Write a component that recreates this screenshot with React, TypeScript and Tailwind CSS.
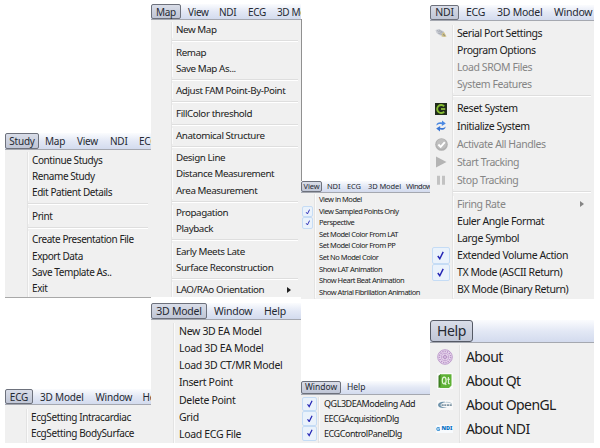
import React from "react";

type Entry = {
  label?: string;
  sep?: boolean;
  off?: boolean;
  checked?: boolean;
  sub?: boolean;
  tall?: boolean;
  icon?: React.ReactNode;
};

type Tab = { label: string; cls: string };

type MenuProps = {
  cls: string;
  bar: string;
  button: string;
  tabs: Tab[];
  gutter: string;
  row: string;
  sepRow?: string;
  text: string;
  pad: string;
  entries: Entry[];
};

const sep: Entry = { sep: true };

function Check() {
  return (
    <span className="flex h-full w-[84%] items-center justify-center rounded-[2px] border border-[#c5dcf5] bg-[#eaf2fb]">
      <svg viewBox="0 0 10 10" className="h-[60%]">
        <path d="M2 5.6 L4.2 8.6 L8 1" fill="none" stroke="#2424b4" strokeWidth="1.6" />
      </svg>
    </span>
  );
}

function Menu({ cls, bar, button, tabs, gutter, row, sepRow = "h-[7px]", text, pad, entries }: MenuProps) {
  return (
    <section className={`flex flex-col overflow-hidden ${cls}`}>
      <nav
        className={`flex shrink-0 items-stretch overflow-hidden border-b border-[#a5a8b0] bg-linear-to-b from-[#fbfcfe] via-[#e3e8f5] to-[#d3dbee] whitespace-nowrap text-[#252932] ${bar}`}
      >
        {tabs.map((t, i) => (
          <span
            key={t.label}
            className={`flex shrink-0 items-center ${t.cls} ${
              i === 0
                ? `justify-center rounded-[2px] border border-[#6d717c] bg-linear-to-b from-[#d9dde8] to-[#c0c6d6] ${button}`
                : ""
            }`}
          >
            {t.label}
          </span>
        ))}
      </nav>
      <ul className={`flex flex-1 flex-col bg-[#f0f0f0] whitespace-nowrap text-[#202020] ${text}`}>
        {entries.map((e, i) => (
          <li key={i} className={`flex shrink-0 items-stretch ${e.sep ? sepRow : e.tall ? "h-[17.9px]" : row}`}>
            <span className={`flex shrink-0 items-center justify-center border-r border-[#e3e3e3] ${gutter}`}>
              {e.checked ? <Check /> : e.icon}
            </span>
            {e.sep ? (
              <span className="mr-[3px] flex flex-1 items-center">
                <span className="h-[2px] w-full border-t border-b border-t-[#dedede] border-b-white" />
              </span>
            ) : (
              <span
                className={`flex flex-1 items-center border-l border-[#fbfbfb] ${pad} ${e.off ? "text-[#858585]" : ""}`}
              >
                {e.label}
                {e.sub && (
                  <svg viewBox="0 0 4 6" className="mr-[10px] ml-auto h-[6px] w-[4px]">
                    <path d="M0 0 L4 3 L0 6Z" fill="currentColor" />
                  </svg>
                )}
              </span>
            )}
          </li>
        ))}
        <li className="flex flex-1 items-stretch">
          <span className={`shrink-0 border-r border-[#e3e3e3] ${gutter}`} />
        </li>
      </ul>
    </section>
  );
}

const SerialIcon = () => (
  <svg viewBox="0 0 12 12" className="h-[12px] w-[12px]">
    <path d="M.5 3 L4 2 L9 4.500 L9 8.500 L5 8.500 L1.500 6Z" fill="#c9ccd3" />
    <path d="M2 3.500 L7 6 M4 3 L8 5.500 M3 6 L7 7.500" stroke="#9a9fa9" strokeWidth=".7" />
    <path d="M7 6.500 L9 5 L11.500 9.500 L9.500 10 L6.500 9.500Z" fill="#cdbf86" />
    <path d="M8 7.500 L10 8.500" stroke="#777" strokeWidth=".8" />
  </svg>
);

const ResetIcon = () => (
  <svg viewBox="0 0 12 12" className="h-[12px] w-[12px]">
    <rect width="12" height="12" fill="#202a1b" />
    <path d="M9.2 3.4 A4 4 0 1 0 9.2 8.6" fill="none" stroke="#86bd32" strokeWidth="1.9" />
    <path d="M10.2 6 H6" fill="none" stroke="#a5d94a" strokeWidth="1.500" />
  </svg>
);

const RefreshIcon = () => (
  <svg viewBox="0 0 12 12" className="h-[12px] w-[12px]">
    <path d="M1.400 5.600 C1.400 2.800 4 1.900 7 2.400 L7 .5 L10.800 3.500 L6.800 5.900 L6.900 4.200 C4.500 3.700 2.800 4 1.400 5.600Z" fill="#4a88e2" />
    <path d="M10.600 6.400 C10.600 9.200 8 10.100 5 9.600 L5 11.500 L1.200 8.500 L5.200 6.100 L5.100 7.800 C7.500 8.300 9.200 8 10.600 6.400Z" fill="#3a76d4" />
  </svg>
);

const ActivateIcon = () => (
  <svg viewBox="0 0 13 13" className="h-[13px] w-[13px]">
    <circle cx="6.500" cy="6.500" r="6.300" fill="#b0b0b0" />
    <circle cx="6.500" cy="6" r="5" fill="#bfbfbf" />
    <path d="M3.400 6.500 L5.700 8.900 L9.800 4.200" fill="none" stroke="#fff" strokeWidth="1.900" />
  </svg>
);

const PlayIcon = () => (
  <svg viewBox="0 0 12 12" className="h-[12px] w-[12px]">
    <path d="M1 .6 L11.500 6 L1 11.400Z" fill="#b4b4b4" />
  </svg>
);

const PauseIcon = () => (
  <svg viewBox="0 0 12 12" className="h-[12px] w-[12px]">
    <path d="M2 1.800h3v9h-3z M7 1.800h3v9h-3z" fill="#c2c2c2" />
  </svg>
);

const SealIcon = () => (
  <svg viewBox="0 0 16 16" className="h-[16px] w-[16px]" fill="none" stroke="#b995c8">
    <circle cx="8" cy="8" r="7.300" fill="#ead9ef" strokeWidth=".9" />
    <circle cx="8" cy="8" r="5.600" strokeWidth="1.500" strokeDasharray="1.3 1" />
    <circle cx="8" cy="8" r="3.800" strokeWidth=".7" />
    <circle cx="8" cy="8" r="1.700" strokeWidth="1" />
    <path d="M8 4.500v7 M4.500 8h7" strokeWidth=".6" />
  </svg>
);

const QtIcon = () => (
  <svg viewBox="0 0 16 16" className="h-[16px] w-[16px]">
    <rect width="16" height="16" fill="#fafafa" />
    <path d="M3 1.200 H14.500 V12.500 L12 15 H2 L3 13.500Z" fill="#5eb135" />
    <path d="M1.500 2.800 L3.500 1.200 V13.500 L1.500 15Z" fill="#3f7f22" />
    <ellipse cx="7.200" cy="7.500" rx="1.900" ry="3.400" fill="none" stroke="#e4f5da" strokeWidth="1.200" />
    <path
      d="M7.500 9.500 L9.200 12 M11.400 4 V10 Q11.400 11 12.800 10.600 M10.200 6.300 H13"
      fill="none"
      stroke="#e4f5da"
      strokeWidth="1.100"
    />
  </svg>
);

const OpenGLIcon = () => (
  <svg viewBox="0 0 16 10" className="h-[10px] w-[16px]">
    <rect width="16" height="10" fill="#f8f8f8" />
    <path
      d="M9 2.200 C5 .8 1 2.500 1 5 C1 7.800 6 8.800 10 7.300 C6 7.600 3.500 6.500 3.500 5 C3.500 3.500 6 2.400 9 2.200Z"
      fill="#6f93ab"
    />
    <path d="M4.500 5.200h2.200 M7.300 5.200h2 M10 5.200h2 M12.600 5.200h2.200" stroke="#8298a7" strokeWidth="1.800" />
    <path d="M9 2.200 Q14 2 15 4.200" fill="none" stroke="#a9bfcc" strokeWidth=".8" />
  </svg>
);

const NdiIcon = () => (
  <span className="flex h-[8px] w-[17px] items-center justify-center gap-[1px] bg-[#f7fafd] text-[5.500px] leading-none font-black tracking-normal text-[#0873c4]">
    <svg viewBox="0 0 4 4" className="h-[4px] w-[4px]" fill="none" stroke="#4c9bd6" strokeWidth="1.100">
      <path d="M3.500 .8 A1.600 1.600 0 1 0 3.500 3.200 V2 H2" />
    </svg>
    NDI
  </span>
);

const L = (label: string): Entry => ({ label });

export default function App() {
  return (
    <main className="flex h-[448px] w-[600px] overflow-hidden bg-white pl-[5px] font-['Noto_Sans','Open_Sans',sans-serif] leading-none">
      <div className="flex w-[146px] flex-col pt-[133px]">
        <Menu
          cls="h-[165px] border-b border-[#a8a8a8]"
          bar="h-[17px] text-[10px] tracking-[-0.25px]"
          button="h-[16px]"
          tabs={[
            { label: "Study", cls: "w-[34px]" },
            { label: "Map", cls: "ml-[6px] w-[32px]" },
            { label: "View", cls: "w-[33px]" },
            { label: "NDI", cls: "w-[29px]" },
            { label: "ECG", cls: "w-[30px]" },
          ]}
          gutter="w-[23px]"
          row="h-[16.400px]"
          text="pt-[1.500px] text-[10px] tracking-[-0.42px]"
          pad="pl-[3px]"
          entries={[
            L("Continue Studys"),
            L("Rename Study"),
            L("Edit Patient Details"),
            sep,
            L("Print"),
            sep,
            L("Create Presentation File"),
            L("Export Data"),
            L("Save Template As.."),
            L("Exit"),
          ]}
        />
        <Menu
          cls="mt-[91px] h-[54px]"
          bar="h-[16px] text-[10px] tracking-[-0.2px]"
          button="h-[15px]"
          tabs={[
            { label: "ECG", cls: "w-[28px]" },
            { label: "3D Model", cls: "ml-[7px] w-[55.500px]" },
            { label: "Window", cls: "w-[47px]" },
            { label: "Help", cls: "w-[30px]" },
          ]}
          gutter="w-[22px]"
          row="h-[16.600px]"
          text="pt-[3.500px] text-[10px] tracking-[-0.38px]"
          pad="pl-[3px]"
          entries={[L("EcgSetting Intracardiac"), L("EcgSetting BodySurface")]}
        />
      </div>

      <div className="flex w-[150px] flex-col pt-[4px]">
        <Menu
          cls="h-[293px]"
          bar="h-[16px] text-[10px] tracking-[-0.35px]"
          button="h-[15px]"
          tabs={[
            { label: "Map", cls: "w-[30px]" },
            { label: "View", cls: "ml-[7px] w-[31px]" },
            { label: "NDI", cls: "w-[29px]" },
            { label: "ECG", cls: "w-[29px]" },
            { label: "3D Model", cls: "w-[50px]" },
          ]}
          gutter="w-[21px]"
          row="h-[16.200px]"
          sepRow="h-[6.200px]"
          text="pt-[2px] text-[9.800px] tracking-[-0.42px]"
          pad="pl-[3px]"
          entries={[
            L("New Map"),
            sep,
            L("Remap"),
            L("Save Map As..."),
            sep,
            L("Adjust FAM Point-By-Point"),
            sep,
            L("FillColor threshold"),
            sep,
            L("Anatomical Structure"),
            sep,
            L("Design Line"),
            L("Distance Measurement"),
            L("Area Measurement"),
            sep,
            L("Propagation"),
            L("Playback"),
            sep,
            L("Early Meets Late"),
            L("Surface Reconstruction"),
            sep,
            { label: "LAO/RAo Orientation", sub: true },
          ]}
        />
        <Menu
          cls="mt-[6px] h-[140px]"
          bar="h-[17px] text-[10.500px] tracking-[-0.25px]"
          button="h-[16px]"
          tabs={[
            { label: "3D Model", cls: "w-[56px]" },
            { label: "Window", cls: "ml-[7px] w-[50px]" },
            { label: "Help", cls: "w-[30px]" },
          ]}
          gutter="w-[23px]"
          row="h-[17.200px]"
          text="pt-[2.500px] text-[10.500px] tracking-[-0.32px]"
          pad="pl-[4px]"
          entries={[
            L("New 3D EA Model"),
            L("Load 3D EA Model"),
            L("Load 3D CT/MR Model"),
            L("Insert Point"),
            L("Delete Point"),
            L("Grid"),
            L("Load ECG File"),
          ]}
        />
      </div>

      <div className="flex w-[129px] flex-col">
        <div className="mt-[19px] h-[162px] w-full shrink-0 border-l border-[#909090]" />
        <Menu
          cls="h-[118px] shrink-0"
          bar="h-[12px] text-[7.500px] tracking-[-0.1px]"
          button="h-[11px]"
          tabs={[
            { label: "View", cls: "w-[21px]" },
            { label: "NDI", cls: "ml-[5px] w-[20px]" },
            { label: "ECG", cls: "w-[21px]" },
            { label: "3D Model", cls: "w-[38px]" },
            { label: "Window", cls: "w-[30px] tracking-[-0.5px]" },
          ]}
          gutter="w-[14px]"
          row="h-[11.600px]"
          text="pt-[1px] text-[7.500px] tracking-[-0.48px]"
          pad="pl-[3px]"
          entries={[
            L("View in Model"),
            { label: "View Sampled Points Only", checked: true },
            { label: "Perspective", checked: true },
            L("Set Model Color From LAT"),
            L("Set Model Color From PP"),
            L("Set No Model Color"),
            L("Show LAT Animation"),
            L("Show Heart Beat Animation"),
            L("Show Atrial Fibrillation Animation"),
          ]}
        />
        <Menu
          cls="mt-[82px] h-[62px] shrink-0"
          bar="h-[14px] text-[8.500px] tracking-[0px]"
          button="h-[13px]"
          tabs={[
            { label: "Window", cls: "w-[40px]" },
            { label: "Help", cls: "ml-[6px] w-[30px]" },
          ]}
          gutter="w-[18px]"
          row="h-[14.700px]"
          text="pt-[1.500px] text-[9px] tracking-[-0.46px]"
          pad="pl-[4px]"
          entries={[
            { label: "QGL3DEAModeling Add", checked: true },
            { label: "EECGAcquisitionDlg", checked: true },
            { label: "ECGControlPanelDlg", checked: true },
          ]}
        />
      </div>

      <div className="flex w-[164px] flex-col pt-[5px]">
        <Menu
          cls="h-[294px] shrink-0"
          bar="h-[16px] text-[10.500px] tracking-[-0.25px]"
          button="h-[15px]"
          tabs={[
            { label: "NDI", cls: "w-[29px]" },
            { label: "ECG", cls: "ml-[7px] w-[31px]" },
            { label: "3D Model", cls: "w-[57px]" },
            { label: "Window", cls: "w-[40px]" },
          ]}
          gutter="w-[23px]"
          row="h-[17.050px]"
          sepRow="h-[6.900px]"
          text="pt-[3.500px] text-[10.500px] tracking-[-0.42px]"
          pad="pl-[3px]"
          entries={[
            { label: "Serial Port Settings", icon: <SerialIcon /> },
            L("Program Options"),
            { label: "Load SROM Files", off: true },
            { label: "System Features", off: true },
            sep,
            { label: "Reset System", tall: true, icon: <ResetIcon /> },
            { label: "Initialize System", tall: true, icon: <RefreshIcon /> },
            { label: "Activate All Handles", tall: true, off: true, icon: <ActivateIcon /> },
            { label: "Start Tracking", tall: true, off: true, icon: <PlayIcon /> },
            { label: "Stop Tracking", tall: true, off: true, icon: <PauseIcon /> },
            sep,
            { label: "Firing Rate", off: true, sub: true },
            L("Euler Angle Format"),
            L("Large Symbol"),
            { label: "Extended Volume Action", checked: true },
            { label: "TX Mode (ASCII Return)", checked: true },
            L("BX Mode (Binary Return)"),
          ]}
        />
        <Menu
          cls="mt-[21px] h-[123px] shrink-0"
          bar="h-[23px] text-[14px] tracking-[-0.4px]"
          button="h-[22px] border-[#555a66] rounded-[3px]"
          tabs={[{ label: "Help", cls: "w-[43px]" }]}
          gutter="w-[30px]"
          row="h-[24px]"
          text="pt-[2px] text-[14px] tracking-[-0.6px]"
          pad="pl-[5px]"
          entries={[
            { label: "About", icon: <SealIcon /> },
            { label: "About Qt", icon: <QtIcon /> },
            { label: "About OpenGL", icon: <OpenGLIcon /> },
            { label: "About NDI", icon: <NdiIcon /> },
          ]}
        />
      </div>
    </main>
  );
}
